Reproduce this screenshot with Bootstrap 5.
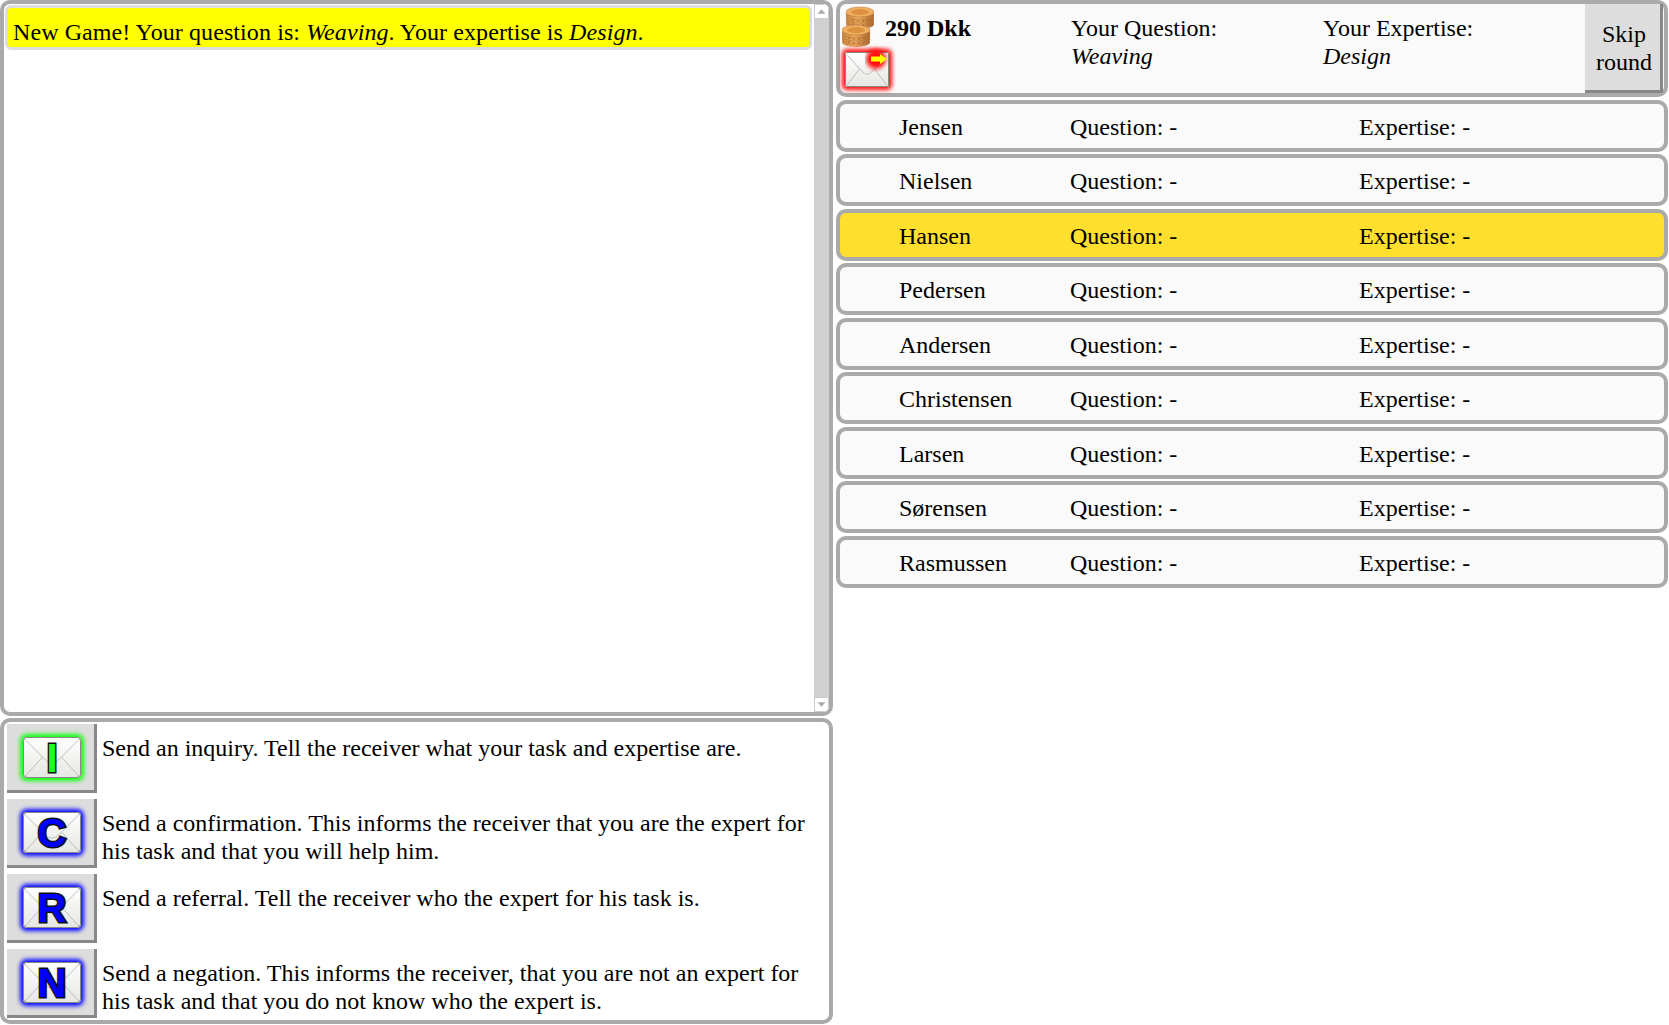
<!DOCTYPE html>
<html lang="en">
<head>
  <meta charset="UTF-8" />
  <meta name="viewport" content="width=device-width, initial-scale=1" />
  <title>Expert Game</title>
  <link href="https://cdn.jsdelivr.net/npm/bootstrap@5.3.0/dist/css/bootstrap.min.css" rel="stylesheet" />
  <style>
    html, body { height: 100%; }
    body {
      font-family: "Liberation Serif", "Times New Roman", serif;
      font-size: 24px;
      line-height: 28px;
      color: #000;
      background: #fff;
      overflow: hidden;
    }
    .game-page { height: 1025px; width: 1668px; gap: 3px; }
    .left-col { width: 833px; gap: 2px; }
    .right-col { width: 832px; gap: 2.55px; }
    .game-panel {
      border: 4px solid #aaa;
      border-radius: 10px;
      background: #fff;
    }
    .messages-panel { height: 716px; overflow: hidden; }
    .msg-list { padding: 1px 0 1px 1px; }
    .msg-new {
      background: #ff0;
      border: 3px solid #ddd;
      border-radius: 6px;
      height: 45px;
      padding: 10px 4px 0 5px;
      letter-spacing: .09px;
    }
    .fake-scroll { width: 15px; margin-left: 2px; background: #d0d0d0; }
    .scroll-btn { height: 15px; background: #fff; border: 1px solid #ccc; }
    .scroll-btn svg { display: block; width: 100%; height: 100%; }
    .send-panel { height: 306px; padding: 2px 3px; gap: 6px; }
    .send-row { height: 69px; }
    .send-text { padding: 10px 0 0 5px; }
    .send-btn {
      width: 90px;
      height: 69px;
      padding: 0 0 0 3px;
      background: #ddd;
      border: 0;
      border-right: 3px solid #888;
      border-bottom: 3px solid #888;
      border-radius: 0;
    }
    .mail-icon {
      width: 58px;
      height: 41px;
      border: 1px solid #888;
      border-radius: 4px;
      background: linear-gradient(#fff, #e6e6e3);
    }
    .mail-icon svg { width: 100%; height: 100%; display: block; }
    .glow-green { box-shadow: 0 0 4px 3px #10ff10; }
    .glow-blue { box-shadow: 0 0 4px 3px #0a0aff; }
    .glow-red { box-shadow: 0 0 4px 3px #ff1010; }
    .mail-letter {
      font-family: "Liberation Sans", Arial, sans-serif;
      font-weight: 700;
      font-size: 40px;
      line-height: 41px;
      color: #00f;
      -webkit-text-stroke: 3px #111;
      paint-order: stroke fill;
    }
    .mail-letter-i { color: #1dff1d; font-size: 40px; }
    .top-info { height: 97px; background: #fafafa; }
    .wallet { width: 43px; margin-left: 2px; padding-top: 2px; }
    .coin-pile { width: 32px; height: 42px; display: block; }
    .small-mail {
      width: 44px;
      height: 35px;
      margin: 4px 0 0 3px;
      border: 1px solid #888;
      border-radius: 2px;
      background: linear-gradient(#fff, #e6e6e3);
    }
    .small-mail .mail-lines { width: 100%; height: 100%; display: block; }
    .small-mail .arrow-out { top: -7px; right: -5px; width: 28px; height: 26px; }
    .money { width: 186px; padding-top: 10px; font-weight: 700; }
    .your-q { width: 252px; padding-top: 10px; }
    .your-e { width: 262px; padding-top: 10px; }
    .skip-btn {
      width: 78px;
      height: 89px;
      padding: 2px 0 0 3px;
      font: inherit;
      line-height: 28px;
      color: #000;
      background: #ddd;
      border: 0;
      border-right: 3px solid #888;
      border-bottom: 3px solid #888;
      border-radius: 0;
    }
    .skip-btn:hover { background: #ddd; color: #000; }
    .player-row { height: 52px; background: #fafafa; padding-left: 59px; padding-top: 9px; }
    .player-active { background: #ffdf2e; }
    .player-name { width: 171px; }
    .player-q { width: 289px; }
  </style>
</head>
<body>
  <div class="game-page d-flex">

    <div class="left-col d-flex flex-column flex-shrink-0">
      <div class="game-panel messages-panel d-flex">
        <div class="msg-list flex-grow-1">
          <div class="msg-new">New Game! Your question is: <i>Weaving</i>. Your expertise is <i>Design</i>.</div>
        </div>
        <div class="fake-scroll d-flex flex-column justify-content-between flex-shrink-0">
          <div class="scroll-btn"><svg viewBox="0 0 15 15"><path d="M3 10L7.5 5L12 10Z" fill="#aaa"/></svg></div>
          <div class="scroll-btn"><svg viewBox="0 0 15 15"><path d="M3 5L7.5 10L12 5Z" fill="#aaa"/></svg></div>
        </div>
      </div>

      <div class="game-panel send-panel d-flex flex-column">
        <div class="send-row d-flex">
          <button type="button" class="btn send-btn d-flex align-items-center justify-content-center flex-shrink-0">
            <span class="mail-icon glow-green position-relative d-block">
              <svg viewBox="0 0 58 41"><path d="M1 2L22 23Q29 30 36 23L57 2M1 40L19 20M57 40L39 20" fill="none" stroke="#bbb"/></svg>
              <span class="mail-letter mail-letter-i position-absolute top-0 start-0 w-100 text-center">I</span>
            </span>
          </button>
          <div class="send-text">Send an inquiry. Tell the receiver what your task and expertise are.</div>
        </div>
        <div class="send-row d-flex">
          <button type="button" class="btn send-btn d-flex align-items-center justify-content-center flex-shrink-0">
            <span class="mail-icon glow-blue position-relative d-block">
              <svg viewBox="0 0 58 41"><path d="M1 2L22 23Q29 30 36 23L57 2M1 40L19 20M57 40L39 20" fill="none" stroke="#bbb"/></svg>
              <span class="mail-letter position-absolute top-0 start-0 w-100 text-center">C</span>
            </span>
          </button>
          <div class="send-text">Send a confirmation. This informs the receiver that you are the expert for his task and that you will help him.</div>
        </div>
        <div class="send-row d-flex">
          <button type="button" class="btn send-btn d-flex align-items-center justify-content-center flex-shrink-0">
            <span class="mail-icon glow-blue position-relative d-block">
              <svg viewBox="0 0 58 41"><path d="M1 2L22 23Q29 30 36 23L57 2M1 40L19 20M57 40L39 20" fill="none" stroke="#bbb"/></svg>
              <span class="mail-letter position-absolute top-0 start-0 w-100 text-center">R</span>
            </span>
          </button>
          <div class="send-text">Send a referral. Tell the receiver who the expert for his task is.</div>
        </div>
        <div class="send-row d-flex">
          <button type="button" class="btn send-btn d-flex align-items-center justify-content-center flex-shrink-0">
            <span class="mail-icon glow-blue position-relative d-block">
              <svg viewBox="0 0 58 41"><path d="M1 2L22 23Q29 30 36 23L57 2M1 40L19 20M57 40L39 20" fill="none" stroke="#bbb"/></svg>
              <span class="mail-letter position-absolute top-0 start-0 w-100 text-center">N</span>
            </span>
          </button>
          <div class="send-text">Send a negation. This informs the receiver, that you are not an expert for his task and that you do not know who the expert is.</div>
        </div>
      </div>
    </div>

    <div class="right-col d-flex flex-column flex-shrink-0">
      <div class="game-panel top-info d-flex">
        <div class="wallet flex-shrink-0">
          <svg class="coin-pile" viewBox="0 0 32 42">
            <defs>
              <linearGradient id="coinSide" x1="0" x2="1" y1="0" y2="0">
                <stop offset="0" stop-color="#c8843c"/>
                <stop offset="0.45" stop-color="#eaa95c"/>
                <stop offset="1" stop-color="#a8642c"/>
              </linearGradient>
              <g id="coinStack">
                <ellipse cx="14" cy="18" rx="14" ry="5" fill="url(#coinSide)"/>
                <ellipse cx="14" cy="15" rx="14" ry="5" fill="url(#coinSide)" stroke="#b0743a" stroke-width=".5"/>
                <ellipse cx="14" cy="12" rx="14" ry="5" fill="url(#coinSide)" stroke="#b0743a" stroke-width=".5"/>
                <ellipse cx="14" cy="9" rx="14" ry="5" fill="url(#coinSide)" stroke="#b0743a" stroke-width=".5"/>
                <ellipse cx="14" cy="6" rx="14" ry="5" fill="#f0b060" stroke="#b0743a" stroke-width=".5"/>
                <ellipse cx="14" cy="6" rx="9" ry="3" fill="#dc923e"/>
                <path d="M6 14h2M11 15h2M16 15h2M21 14h2M6 18h2M11 19h2M16 19h2M21 18h2" stroke="#a8642c" stroke-width="1.2"/>
              </g>
            </defs>
            <use href="#coinStack" x="4" y="0"/>
            <use href="#coinStack" x="0" y="18"/>
          </svg>
          <div class="small-mail glow-red position-relative">
            <svg class="mail-lines" viewBox="0 0 44 35"><path d="M1 2L17 20Q22 25 27 20L43 2M1 34L14 17M43 34L30 17" fill="none" stroke="#bbb"/></svg>
            <svg class="arrow-out position-absolute" viewBox="0 0 28 26">
              <defs><filter id="redBlur" x="-30%" y="-30%" width="160%" height="160%"><feGaussianBlur stdDeviation="2"/></filter></defs>
              <circle cx="11" cy="13" r="10" fill="#ff1010" filter="url(#redBlur)"/>
              <path d="M6 10.5H15V8L22 13L15 18V15.5H6Z" fill="#ff0"/>
            </svg>
          </div>
        </div>
        <div class="money flex-shrink-0">290 Dkk</div>
        <div class="your-q flex-shrink-0">Your Question:<br /><i>Weaving</i></div>
        <div class="your-e flex-shrink-0">Your Expertise:<br /><i>Design</i></div>
        <button type="button" class="btn skip-btn flex-shrink-0">Skip<br />round</button>
      </div>

      <div class="game-panel player-row d-flex"><div class="player-name">Jensen</div><div class="player-q">Question: -</div><div>Expertise: -</div></div>
      <div class="game-panel player-row d-flex"><div class="player-name">Nielsen</div><div class="player-q">Question: -</div><div>Expertise: -</div></div>
      <div class="game-panel player-row player-active d-flex"><div class="player-name">Hansen</div><div class="player-q">Question: -</div><div>Expertise: -</div></div>
      <div class="game-panel player-row d-flex"><div class="player-name">Pedersen</div><div class="player-q">Question: -</div><div>Expertise: -</div></div>
      <div class="game-panel player-row d-flex"><div class="player-name">Andersen</div><div class="player-q">Question: -</div><div>Expertise: -</div></div>
      <div class="game-panel player-row d-flex"><div class="player-name">Christensen</div><div class="player-q">Question: -</div><div>Expertise: -</div></div>
      <div class="game-panel player-row d-flex"><div class="player-name">Larsen</div><div class="player-q">Question: -</div><div>Expertise: -</div></div>
      <div class="game-panel player-row d-flex"><div class="player-name">Sørensen</div><div class="player-q">Question: -</div><div>Expertise: -</div></div>
      <div class="game-panel player-row d-flex"><div class="player-name">Rasmussen</div><div class="player-q">Question: -</div><div>Expertise: -</div></div>
    </div>

  </div>

  <script src="https://cdn.jsdelivr.net/npm/bootstrap@5.3.0/dist/js/bootstrap.bundle.min.js"></script>
</body>
</html>
